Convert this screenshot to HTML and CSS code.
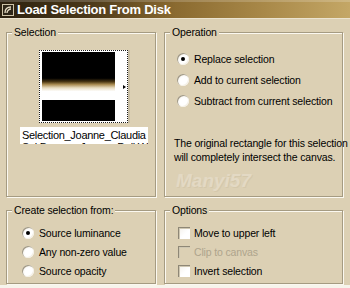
FILE: index.html
```html
<!DOCTYPE html>
<html lang="en">
<head>
    <meta charset="UTF-8">
    <title>Load Selection From Disk</title>
    <link rel="stylesheet" href="styles.css">
</head>
<body>
    <div class="dialog">
        <div class="titlebar">
            <svg class="app-icon" width="12" height="12" viewBox="0 0 12 12">
                <rect x="0.5" y="0.5" width="11" height="11" fill="#2e2618" stroke="#cfc4a8"/>
                <path d="M3 9 C3 5, 5 3, 9 3 M5 9 C5 7, 7 5, 9 5" fill="none" stroke="#e6dcc4" stroke-width="1.3"/>
            </svg>
            <span>Load Selection From Disk</span>
        </div>
        <div class="panes">
            <!-- selection preview -->
            <div class="group">
                <div class="group-label">Selection</div>
                <div class="thumb">
                    <div class="thumb-img"></div>
                    <div class="thumb-side"><i class="thumb-arrow"></i></div>
                </div>
                <div class="filename">Selection_Joanne_Claudia<br>Sel Brosses Jeanne Dall Wande</div>
            </div>
            <!-- operation -->
            <div class="group">
                <div class="group-label">Operation</div>
                <div class="op-list">
                    <div class="opt"><span class="radio checked"></span>Replace selection</div>
                    <div class="opt"><span class="radio"></span>Add to current selection</div>
                    <div class="opt"><span class="radio"></span>Subtract from current selection</div>
                </div>
                <p class="note">The original rectangle for this selection<br>will completely intersect the canvas.</p>
                <div class="mark">Manyi57</div>
            </div>
            <!-- source -->
            <div class="group">
                <div class="group-label">Create selection from:</div>
                <div class="src-list">
                    <div class="opt"><span class="radio checked"></span>Source luminance</div>
                    <div class="opt"><span class="radio"></span>Any non-zero value</div>
                    <div class="opt"><span class="radio"></span>Source opacity</div>
                </div>
            </div>
            <!-- options -->
            <div class="group">
                <div class="group-label">Options</div>
                <div class="chk-list">
                    <div class="opt"><span class="check"></span>Move to upper left</div>
                    <div class="opt disabled"><span class="check"></span>Clip to canvas</div>
                    <div class="opt"><span class="check"></span>Invert selection</div>
                </div>
            </div>
        </div>
    </div>
</body>
</html>
```

FILE: styles.css
```css
*{
    padding: 0;
    margin: 0;
    box-sizing: border-box;
}
body{
    background-color: #f7f4ec;
    font-family: "Liberation Sans", Arial, sans-serif;
    font-size: 10.5px;
    letter-spacing: -0.15px;
    color: #000;
}
.dialog{
    width: 350px;
    height: 285px;
    background-color: #dcd0b4;
    overflow: hidden;
}
.titlebar{
    display: flex;
    align-items: center;
    height: 19px;
    padding-left: 2px;
    border-bottom: 1px solid #ebe3cf;
    background: linear-gradient(to right, #2c2110 0%, #4a3819 25%, #8a6a30 50%, #a88848 75%, #c4a766 100%);
    box-shadow: inset 0 2px 0 rgba(255,255,255,0.18);
    color: #fff;
}
.app-icon{
    flex: none;
    margin-top: 1px;
}
.titlebar span{
    margin-left: 3px;
    font-weight: bold;
    font-size: 13px;
    letter-spacing: -0.25px;
}
.panes{
    display: grid;
    grid-template-columns: 150px 179px;
    grid-template-rows: 165px 74px;
    column-gap: 8px;
    row-gap: 13px;
    padding: 13px 0 0 6px;
}
.group{
    border: 1px solid #a59b82;
    box-shadow: inset 1px 1px 0 #fbf8f0, 1px 1px 0 #fbf8f0;
}
.group-label{
    display: table;
    height: 13px;
    line-height: 13px;
    margin: -7px 0 0 5px;
    padding: 0 2px;
    background-color: #dcd0b4;
}
/* selection preview */
.thumb{
    display: flex;
    width: 89px;
    height: 73px;
    margin: 11px 0 0 32px;
    padding: 1px 0 1px 2px;
    border: 1px dotted #1a1a1a;
    background-color: #fff;
    box-shadow: 2px 0 0 #c9bea4;
}
.thumb-img{
    width: 73px;
    height: 100%;
    background: linear-gradient(to bottom, #000 0%, #000 38%, #4a3612 43%, #a88a50 47%, #e8dcc0 52%, #fff 57%, #fff 70%, #000 70%, #000 100%);
}
.thumb-side{
    flex: 1;
    display: flex;
    align-items: center;
    justify-content: flex-end;
    padding-right: 1px;
}
.thumb-arrow{
    width: 0;
    height: 0;
    border-top: 2px solid transparent;
    border-bottom: 2px solid transparent;
    border-left: 3px solid #000;
}
.filename{
    width: 128px;
    height: 17px;
    margin: 4px 0 0 13px;
    padding: 2px 0 0 2px;
    line-height: 12px;
    font-size: 11px;
    letter-spacing: -0.3px;
    background-color: #fff;
    overflow: hidden;
    white-space: nowrap;
}
/* options rows */
.opt{
    display: flex;
    align-items: center;
    height: 21px;
}
.op-list{
    margin-top: 9px;
    padding-left: 12px;
}
.src-list{
    margin-top: 6px;
    padding-left: 15px;
}
.src-list .opt,
.chk-list .opt{
    height: 19px;
}
.chk-list{
    margin-top: 6px;
    padding-left: 13px;
}
.radio{
    position: relative;
    flex: none;
    width: 12px;
    height: 12px;
    margin-right: 5px;
    border-radius: 50%;
    background: radial-gradient(circle at 60% 60%, #fff 40%, #ece7dc 100%);
    box-shadow: inset 1px 1px 0 #a09884, inset -1px -1px 0 #f4f0e6;
}
.radio.checked::after{
    content: "";
    position: absolute;
    left: 4px;
    top: 4px;
    width: 4px;
    height: 4px;
    border-radius: 50%;
    background-color: #000;
}
.check{
    flex: none;
    width: 12px;
    height: 12px;
    margin-right: 4px;
    background: linear-gradient(135deg, #f2efe8 0%, #fff 60%);
    box-shadow: inset 1px 1px 0 #8e8776, inset 2px 2px 0 #cfc7b2;
}
.disabled{
    color: #aea48c;
}
.disabled .check{
    background: #dcd0b4;
}
.note{
    margin-top: 25px;
    padding-left: 9px;
    line-height: 14px;
    white-space: nowrap;
}
.mark{
    margin: 6px 0 0 11px;
    font-size: 19px;
    font-weight: bold;
    font-style: italic;
    letter-spacing: 0;
    color: #e3d9c4;
    text-shadow: 1px 1px 0 #d4c8ac;
}
```
